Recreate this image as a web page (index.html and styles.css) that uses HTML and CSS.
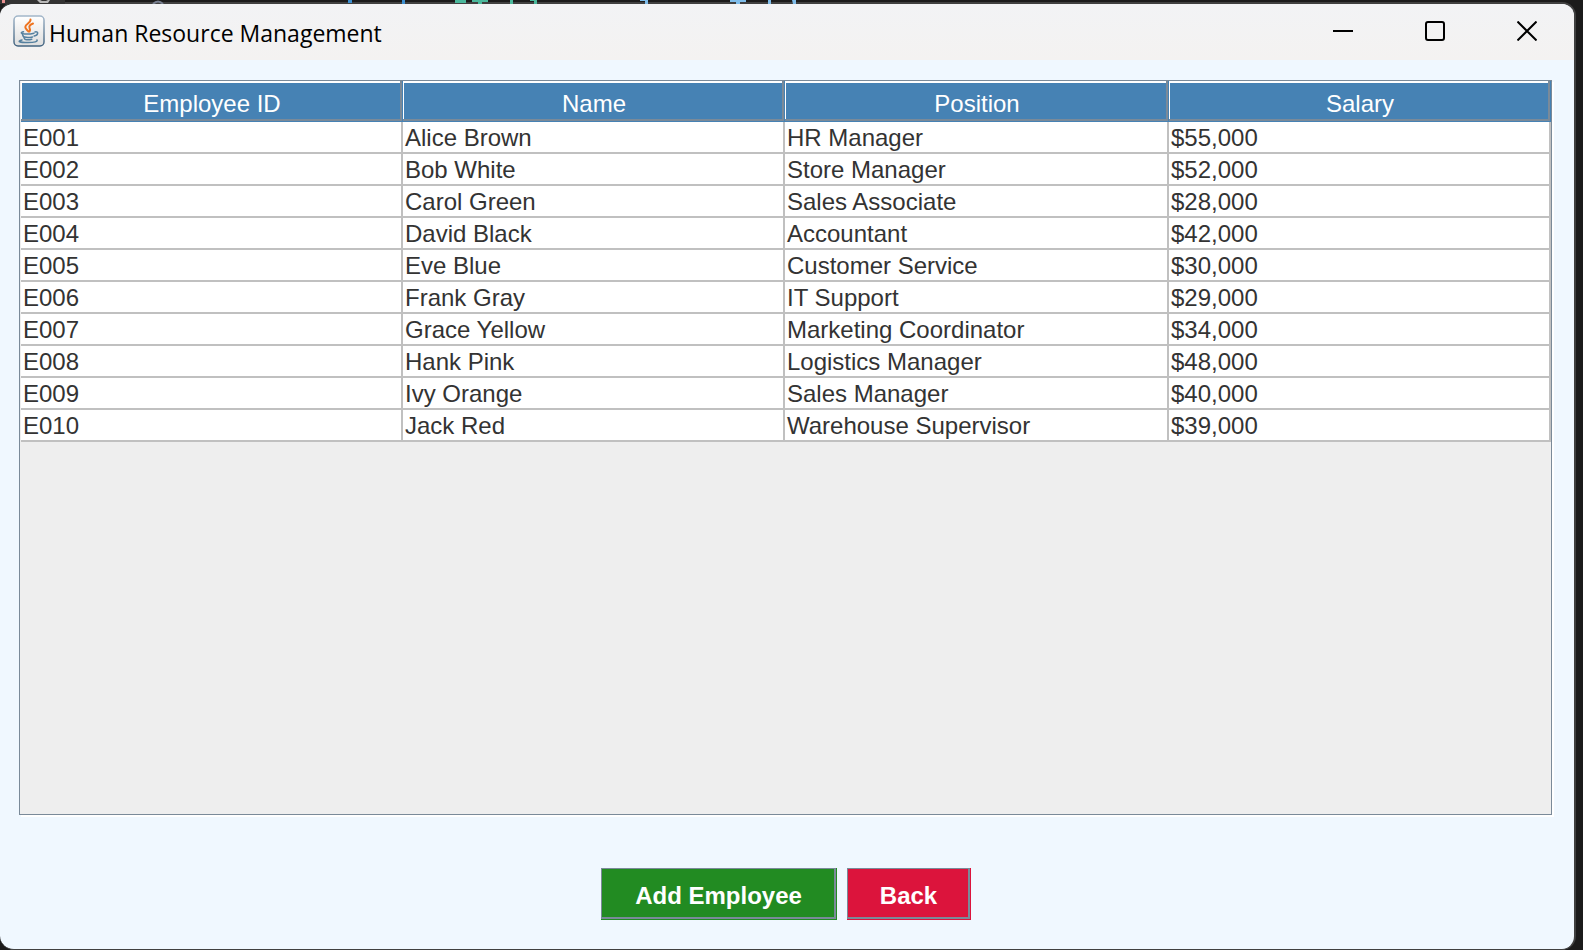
FILE: index.html
```html
<!DOCTYPE html>
<html lang="en">
<head>
<meta charset="utf-8">
<title>Human Resource Management</title>
<link rel="stylesheet" href="styles.css">
</head>
<body>
<svg class="backdrop" width="820" height="4" viewBox="0 0 820 4" aria-hidden="true">
  <path fill="#333" d="M0 0h65v4H0z"/>
  <path fill="#e89090" d="M2 0h3v3H2z"/>
  <path fill="#b8b8b8" d="M37 0h3l2 1h4l2-1h2l-2 3h-8z"/>
  <path fill="none" stroke="#777f90" stroke-width="2" d="M153 4q5-5 10 0"/>
  <path fill="#3c8fd0" d="M348 0h4v3h-4zM402 0h3v4h-3z"/>
  <path fill="#4ab89c" d="M455 0h11v3h-11zM472 0h16v2h-6v2h-4V2h-6zM510 0h3v4h-3zM530 0h7v4h-3V1h-4z"/>
  <path fill="#7fbdea" d="M640 0h8v4h-3V1h-5zM730 0h16v2h-6v2h-4V2h-6zM768 0h3v4h-3zM792 0h4v4h-3z"/>
</svg>
<div class="window">
  <header class="titlebar">
    <svg class="app-icon" width="32" height="32" viewBox="0 0 32 32" aria-hidden="true">
      <defs>
        <linearGradient id="plate" x1="0" y1="0" x2="0" y2="1"><stop offset="0" stop-color="#fff"/><stop offset="1" stop-color="#dedede"/></linearGradient>
        <linearGradient id="rim" x1="0" y1="0" x2="0" y2="1"><stop offset="0" stop-color="#a3b7ca"/><stop offset="1" stop-color="#426380"/></linearGradient>
      </defs>
      <rect x="1" y="1" width="30" height="30" rx="4" fill="url(#plate)" stroke="url(#rim)" stroke-width="1.5"/>
      <g fill="none" stroke="#ee7420" stroke-width="2" stroke-linecap="round">
        <path d="M17.500 4.500c.6 3.500-5.300 4.200-5.200 7.500 0 2.200 2.400 3 3 4.500"/>
        <path d="M20 8.500c-2.500 1-4.300 2.300-3.500 4.200.7 1.300.8 2.300 0 3.800"/>
      </g>
      <g fill="none" stroke="#55809f" stroke-width="1.500" stroke-linecap="round">
        <path d="M10.500 16.800c-3.500.8-2.500 2 1 2.200 3.500.2 6.500 0 9.500-.8"/>
        <path d="M9.500 19.500c.3 1.500 1 2.300 2 2.600 2.500.6 5 .5 8-.2"/>
        <path d="M11 22.500c.3 1.200.8 1.900 1.500 2.100 2 .4 4 .3 6.300-.3"/>
        <path d="M22 17c4-1 3.300 3.300-.8 4"/>
        <path d="M9 25c-5.500 1.300-2.500 2.600 6 2.600 6.500 0 10-1 9-2.600"/>
      </g>
    </svg>
    <h1 class="title">Human Resource Management</h1>
    <div class="controls">
      <button class="control" aria-label="Minimize"><svg width="20" height="20" viewBox="0 0 20 20"><path d="M0 10h20"/></svg></button>
      <button class="control" aria-label="Maximize"><svg width="20" height="20" viewBox="0 0 20 20"><rect x="1" y="1" width="18" height="18" rx="2"/></svg></button>
      <button class="control" aria-label="Close"><svg width="20" height="20" viewBox="0 0 20 20"><path d="M0.500 0.500l19 19M19.500 0.500l-19 19"/></svg></button>
    </div>
  </header>
  <main class="content">
    <div class="table-frame">
      <table class="employees">
        <thead><tr><th>Employee ID</th><th>Name</th><th class="position">Position</th><th>Salary</th></tr></thead>
        <tbody>
          <tr><td>E001</td><td>Alice Brown</td><td>HR Manager</td><td>$55,000</td></tr>
          <tr><td>E002</td><td>Bob White</td><td>Store Manager</td><td>$52,000</td></tr>
          <tr><td>E003</td><td>Carol Green</td><td>Sales Associate</td><td>$28,000</td></tr>
          <tr><td>E004</td><td>David Black</td><td>Accountant</td><td>$42,000</td></tr>
          <tr><td>E005</td><td>Eve Blue</td><td>Customer Service</td><td>$30,000</td></tr>
          <tr><td>E006</td><td>Frank Gray</td><td>IT Support</td><td>$29,000</td></tr>
          <tr><td>E007</td><td>Grace Yellow</td><td>Marketing Coordinator</td><td>$34,000</td></tr>
          <tr><td>E008</td><td>Hank Pink</td><td>Logistics Manager</td><td>$48,000</td></tr>
          <tr><td>E009</td><td>Ivy Orange</td><td>Sales Manager</td><td>$40,000</td></tr>
          <tr><td>E010</td><td>Jack Red</td><td>Warehouse Supervisor</td><td>$39,000</td></tr>
        </tbody>
      </table>
    </div>
    <div class="actions">
      <button class="action add">Add Employee</button>
      <button class="action back">Back</button>
    </div>
  </main>
</div>
</body>
</html>
```
FILE: styles.css
```css
* {
  box-sizing: border-box;
}

body {
  margin: 0;
  height: 100vh;
  padding: 2px 7px 0 0;
  background: #1b1b1b;
  font-family: "Liberation Sans", Arial, sans-serif;
  font-size: 24px;
}

.backdrop {
  position: absolute;
  top: 0;
  left: 0;
  display: block;
}

.window {
  display: flex;
  flex-direction: column;
  height: 100%;
  border: solid #404040;
  border-width: 2px 2px 1px 0;
  border-radius: 14px;
  overflow: hidden;
  background: #f0f8ff;
}

.titlebar {
  display: flex;
  align-items: center;
  height: 56px;
  padding: 0 1px 2px 13px;
  background: linear-gradient(to bottom, #f2f3f5, #f4f2f1);
}

.title {
  flex: 1;
  margin: 0 0 0 4px;
  padding-top: 4px;
  font: 400 23px/32px "Open Sans", "Noto Sans", sans-serif;
  color: #000;
}

.controls {
  display: flex;
  align-self: stretch;
}

.control {
  width: 92px;
  border: 0;
  padding: 0;
  background: none;
}

.control svg {
  display: block;
  margin: 0 auto;
  fill: none;
  stroke: #000;
  stroke-width: 2;
}

.content {
  flex: 1;
  display: flex;
  flex-direction: column;
  padding: 20px 22px 29px 19px;
}

.table-frame {
  flex: 1;
  padding-left: 1px;
  border: 1px solid #7a8a99;
  background: #eee;
  box-shadow: 2px 2px 0 #fff;
}

.employees {
  width: 100%;
  table-layout: fixed;
  border-spacing: 0;
  color: #333;
  line-height: 28px;
}

.employees th {
  height: 41px;
  padding: 4px 0 0;
  background: #4682b4;
  box-shadow: inset -1px -1px #4682b4, inset -3px -3px #7a8a99, inset 1px 2px #fff;
  color: #fff;
  font-weight: 400;
}

.employees .position {
  width: 25.1%;
}

.employees td {
  height: 32px;
  padding: 2px 2px 0;
  border: solid #c0c0c0;
  border-width: 0 2px 2px 0;
  background: #fff;
}

.actions {
  display: flex;
  justify-content: center;
  gap: 10px;
  margin-top: 53px;
}

.action {
  height: 52px;
  padding: 4px 0 0;
  border: 0;
  color: #fff;
  font: 700 24px/30px "Liberation Sans", Arial, sans-serif;
}

.add {
  width: 236px;
  background: #228b22;
  box-shadow: inset -1px -1px #228b22, inset -3px -3px #7a8a99, inset 1px 1px #7a8a99;
}

.back {
  width: 124px;
  background: #dc143c;
  box-shadow: inset -1px -1px #dc143c, inset -3px -3px #7a8a99, inset 1px 1px #7a8a99;
}
```
